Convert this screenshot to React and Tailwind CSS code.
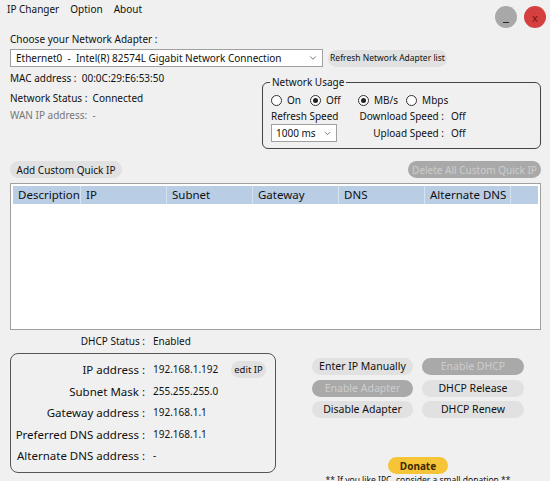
import { ChevronDown } from "lucide-react";

const font = { fontFamily: '"Noto Sans", "Open Sans", sans-serif' };

function Radio({ checked, label }) {
  return (
    <label className="flex items-center gap-[5px]">
      <span className="w-[11px] h-[11px] rounded-full border border-[#333] bg-white flex items-center justify-center">
        {checked && <span className="w-[5px] h-[5px] rounded-full bg-[#222]" />}
      </span>
      <span>{label}</span>
    </label>
  );
}

function Pill({ children, disabled, className = "" }) {
  return (
    <button
      className={
        "h-[17px] rounded-full flex items-center justify-center leading-none whitespace-nowrap " +
        (disabled ? "bg-[#a9a9a9] text-[#cdcdcd] " : "bg-[#e1e1e1] text-[#111] ") +
        className
      }
    >
      {children}
    </button>
  );
}

const columns = [
  ["Description", "w-[68px]"],
  ["IP", "w-[86px]"],
  ["Subnet", "w-[86px]"],
  ["Gateway", "w-[86px]"],
  ["DNS", "w-[86px]"],
  ["Alternate DNS", "w-[86px]"],
];

const ipRows = [
  ["IP address :", "192.168.1.192"],
  ["Subnet Mask :", "255.255.255.0"],
  ["Gateway address :", "192.168.1.1"],
  ["Preferred DNS address :", "192.168.1.1"],
  ["Alternate DNS address :", "-"],
];

export default function App() {
  return (
    <div
      className="w-[550px] h-[481px] bg-[#f0f0f0] text-[10px] text-[#111] overflow-hidden"
      style={font}
    >
      {/* menu bar + window buttons */}
      <div className="h-[32px] flex items-start">
        <div className="flex gap-[11px] pl-[7px] pt-[2px] text-[10px]">
          <span>IP Changer</span>
          <span>Option</span>
          <span>About</span>
        </div>
        <div className="ml-auto flex gap-[7px] pt-[6px] pr-[4px]">
          <div className="w-[22px] h-[22px] rounded-full bg-[#a8a8a8] flex items-end justify-center pb-[5px]">
            <span className="w-[6px] h-[1px] bg-[#222]" />
          </div>
          <div className="w-[22px] h-[22px] rounded-full bg-[#d53f3f] flex items-center justify-center text-[#7a1010] text-[11px] leading-none">
            x
          </div>
        </div>
      </div>

      <div className="pl-[10px] leading-[15px]">Choose your Network Adapter :</div>
      <div className="flex items-center pl-[10px] mt-[2px]">
        <div className="w-[313px] h-[18px] bg-white border border-[#a0a0a0] flex items-center pl-[5px] pr-[4px]">
          <span className="whitespace-pre">Ethernet0  -  Intel(R) 82574L Gigabit Network Connection</span>
          <ChevronDown className="ml-auto text-[#555]" size={10} strokeWidth={2} />
        </div>
        <Pill className="ml-[5px] w-[119px] text-[8.5px]">Refresh Network Adapter list</Pill>
      </div>

      <div className="flex">
        <div className="pl-[10px] pt-[4px] leading-[15px]">
          <div className="whitespace-pre">MAC address :  00:0C:29:E6:53:50</div>
          <div className="mt-[5px] whitespace-pre">Network Status :  Connected</div>
          <div className="mt-[2px] text-[#777] whitespace-pre">WAN IP address:  -</div>
        </div>
        <fieldset className="ml-auto mr-[9px] mt-[8px] w-[279px] h-[74px] border border-[#444] rounded-[6px] px-[8px]">
          <legend className="px-[2px] ml-[-1px] leading-[15px]">Network Usage</legend>
          <div className="flex">
            <div className="w-[87px] shrink-0">
              <div className="flex gap-[9px] h-[18px] items-end">
                <Radio label="On" />
                <Radio checked label="Off" />
              </div>
              <div className="leading-[15px] mt-[1px]">Refresh Speed</div>
              <div className="w-[66px] h-[18px] bg-white border border-[#a0a0a0] flex items-center pl-[4px] pr-[4px]">
                <span>1000 ms</span>
                <ChevronDown className="ml-auto text-[#555]" size={9} strokeWidth={2} />
              </div>
            </div>
            <div>
              <div className="flex gap-[8px] h-[18px] items-end">
                <Radio checked label="MB/s" />
                <Radio label="Mbps" />
              </div>
              <div className="flex leading-[15px] mt-[1px] whitespace-nowrap">
                <span className="w-[86px] shrink-0 text-right">Download Speed :</span>
                <span className="ml-[7px]">Off</span>
              </div>
              <div className="flex leading-[15px] mt-[2px] whitespace-nowrap">
                <span className="w-[86px] shrink-0 text-right">Upload Speed :</span>
                <span className="ml-[7px]">Off</span>
              </div>
            </div>
          </div>
        </fieldset>
      </div>

      <div className="flex justify-between pl-[10px] pr-[9px] mt-[12px]">
        <Pill className="w-[112px]">Add Custom Quick IP</Pill>
        <Pill disabled className="w-[133px]">Delete All Custom Quick IP</Pill>
      </div>

      {/* quick IP list */}
      <div className="ml-[10px] mr-[9px] mt-[5px] h-[147px] bg-white border border-[#a0a0a0] p-[2px]">
        <div className="flex h-[18px] bg-[#b9cde5] text-[11.5px]">
          {columns.map(([name, w]) => (
            <div key={name} className={w + " border-r border-[#d6e2f0] pl-[5px] leading-[18px] whitespace-nowrap"}>
              {name}
            </div>
          ))}
        </div>
      </div>

      <div className="flex">
        <div className="pl-[10px] w-[286px]">
          <div className="flex leading-[15px] mt-[4px]">
            <span className="w-[135px] text-right">DHCP Status :</span>
            <span className="ml-[8px]">Enabled</span>
          </div>
          <div className="mt-[4px] w-[266px] h-[120px] border border-[#555] rounded-[8px] pt-[5px] text-[11.5px]">
            {ipRows.map(([label, value], i) => (
              <div key={label} className="flex items-center h-[21.5px]">
                <span className="w-[134px] text-right">{label}</span>
                <span className="ml-[8px] text-[10px]">{value}</span>
                {i === 0 && (
                  <Pill className="ml-auto mr-[9px] w-[35px] text-[9.5px]">edit IP</Pill>
                )}
              </div>
            ))}
          </div>
        </div>

        <div className="flex flex-col pl-[26px] pt-[28px] text-[10.5px]">
          <div className="grid grid-cols-[101px_102px] gap-x-[9px] gap-y-[4.5px]">
            <Pill>Enter IP Manually</Pill>
            <Pill disabled>Enable DHCP</Pill>
            <Pill disabled>Enable Adapter</Pill>
            <Pill>DHCP Release</Pill>
            <Pill>Disable Adapter</Pill>
            <Pill>DHCP Renew</Pill>
          </div>
          <div className="flex flex-col items-center mt-[39px] w-[212px]">
            <button className="w-[60px] h-[17px] rounded-full bg-[#f6c437] text-[#3b2a00] font-bold leading-none text-[10px]">
              Donate
            </button>
            <div className="text-[8.5px] leading-[10px] mt-[1px] whitespace-nowrap">** If you like IPC, consider a small donation **</div>
          </div>
        </div>
      </div>
    </div>
  );
}
